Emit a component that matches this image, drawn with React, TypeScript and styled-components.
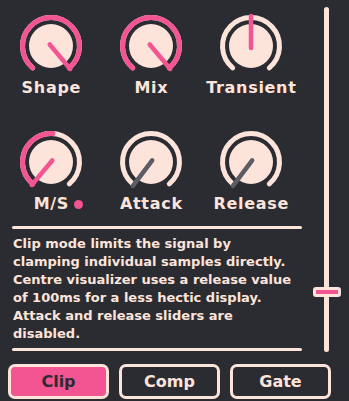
import React from "react"
import styled, { createGlobalStyle } from "styled-components"

const BG = "#2b2c32"
const CREAM = "#fde4da"
const PINK = "#f25592"
const GREY = "#5b5c64"

const GlobalStyle = createGlobalStyle`
  html, body {
    margin: 0;
    padding: 0;
    background: ${BG};
  }
  * {
    box-sizing: border-box;
  }
`

const polar = (r: number, deg: number) => {
  const a = (deg * Math.PI) / 180
  return [35 + r * Math.sin(a), 35 - r * Math.cos(a)]
}

const arcPath = (r: number, a0: number, a1: number) => {
  const [x0, y0] = polar(r, a0)
  const [x1, y1] = polar(r, a1)
  const large = a1 - a0 > 180 ? 1 : 0
  return `M ${x0} ${y0} A ${r} ${r} 0 ${large} 1 ${x1} ${y1}`
}

type KnobProps = {
  label: string
  pinkTo?: number
  pointer: number
  pointerColor: string
  dot?: boolean
}

const MIN = -140
const MAX = 140

const Knob = ({ label, pinkTo, pointer, pointerColor, dot }: KnobProps) => {
  const [px0, py0] = polar(-2, pointer)
  const [px1, py1] = polar(30, pointer)
  return (
    <KnobCell>
      <svg width="70" height="70" viewBox="0 0 70 70">
        <path d={arcPath(28.5, MIN, MAX)} stroke={CREAM} strokeWidth="5" fill="none" strokeLinecap="round" />
        {pinkTo !== undefined && (
          <path d={arcPath(28.5, MIN, pinkTo)} stroke={PINK} strokeWidth="5" fill="none" strokeLinecap="round" />
        )}
        <circle cx="35" cy="35" r="22" fill={CREAM} />
        <line x1={px0} y1={py0} x2={px1} y2={py1} stroke={pointerColor} strokeWidth="4.5" strokeLinecap="round" />
      </svg>
      <KnobLabel>
        {label}
        {dot && <Dot />}
      </KnobLabel>
    </KnobCell>
  )
}

const lines = [
  "Clip mode limits the signal by",
  "clamping individual samples directly.",
  "Centre visualizer uses a release value",
  "of 100ms for a less hectic display.",
  "Attack and release sliders are",
  "disabled.",
]

const App = () => {
  return (
    <Wrapper>
      <GlobalStyle />
      <Main>
        <LeftPanel>
          <KnobGrid>
            <Knob label="Shape" pinkTo={MAX} pointer={MAX} pointerColor={PINK} />
            <Knob label="Mix" pinkTo={MAX} pointer={MAX} pointerColor={PINK} />
            <Knob label="Transient" pointer={0} pointerColor={PINK} />
            <Knob label="M/S" pinkTo={4} pointer={MIN} pointerColor={PINK} dot />
            <Knob label="Attack" pointer={MIN - 3} pointerColor={GREY} />
            <Knob label="Release" pointer={MIN - 3} pointerColor={GREY} />
          </KnobGrid>
          <Divider />
          <Description>
            {lines.map((l, i) => (
              <DescLine key={i}>{l}</DescLine>
            ))}
          </Description>
          <Divider $bottom />
        </LeftPanel>
        <SliderColumn>
          <Track>
            <Thumb />
          </Track>
        </SliderColumn>
      </Main>
      <ButtonRow>
        <ModeButton $active>Clip</ModeButton>
        <ModeButton>Comp</ModeButton>
        <ModeButton>Gate</ModeButton>
      </ButtonRow>
    </Wrapper>
  )
}

const Wrapper = styled.div`
  width: 349px;
  height: 401px;
  background: ${BG};
  color: ${CREAM};
  font-family: "DejaVu Sans", Verdana, sans-serif;
  font-weight: bold;
  overflow: hidden;
`

const Main = styled.div`
  display: flex;
  height: 352px;
`

const LeftPanel = styled.div`
  width: 310px;
  display: flex;
  flex-direction: column;
`

const KnobGrid = styled.div`
  display: grid;
  grid-template-columns: repeat(3, 100px);
  row-gap: 18px;
  padding-left: 1px;
`

const KnobCell = styled.div`
  display: flex;
  flex-direction: column;
  align-items: center;
  padding-top: 11px;
`

const KnobLabel = styled.div`
  position: relative;
  margin-top: -3px;
  font-size: 16px;
  line-height: 20px;
  letter-spacing: 0.7px;
  padding-left: 0.7px;
`

const Dot = styled.span`
  position: absolute;
  right: -14px;
  top: 6px;
  width: 9px;
  height: 9px;
  border-radius: 50%;
  background: ${PINK};
`

const Divider = styled.div<{ $bottom?: boolean }>`
  height: 3px;
  border-radius: 2px;
  background: ${CREAM};
  margin: ${(p) => (p.$bottom ? "5px 8px 0 12px" : "12px 8px 0 12px")};
`

const Description = styled.div`
  margin-top: 6px;
  padding-left: 13px;
  font-size: 13px;
  line-height: 18px;
`

const DescLine = styled.div`
  white-space: nowrap;
`

const SliderColumn = styled.div`
  width: 33px;
  display: flex;
  justify-content: center;
  padding-top: 7px;
`

const Track = styled.div`
  position: relative;
  width: 5px;
  height: 345px;
  border-radius: 3px;
  background: ${CREAM};
`

const Thumb = styled.div`
  position: absolute;
  left: 50%;
  top: 280px;
  width: 28px;
  height: 10px;
  margin-left: -14px;
  border-radius: 3px;
  background: ${PINK};
  border: 3px solid ${CREAM};
`

const ButtonRow = styled.div`
  display: flex;
  gap: 10px;
  padding-left: 8px;
  margin-top: 12px;
`

const ModeButton = styled.div<{ $active?: boolean }>`
  width: 101px;
  height: 35px;
  display: flex;
  align-items: center;
  justify-content: center;
  border: 3px solid ${CREAM};
  border-radius: 7px;
  background: ${(p) => (p.$active ? PINK : BG)};
  color: ${(p) => (p.$active ? BG : CREAM)};
  font-size: 16px;
`

export default App
